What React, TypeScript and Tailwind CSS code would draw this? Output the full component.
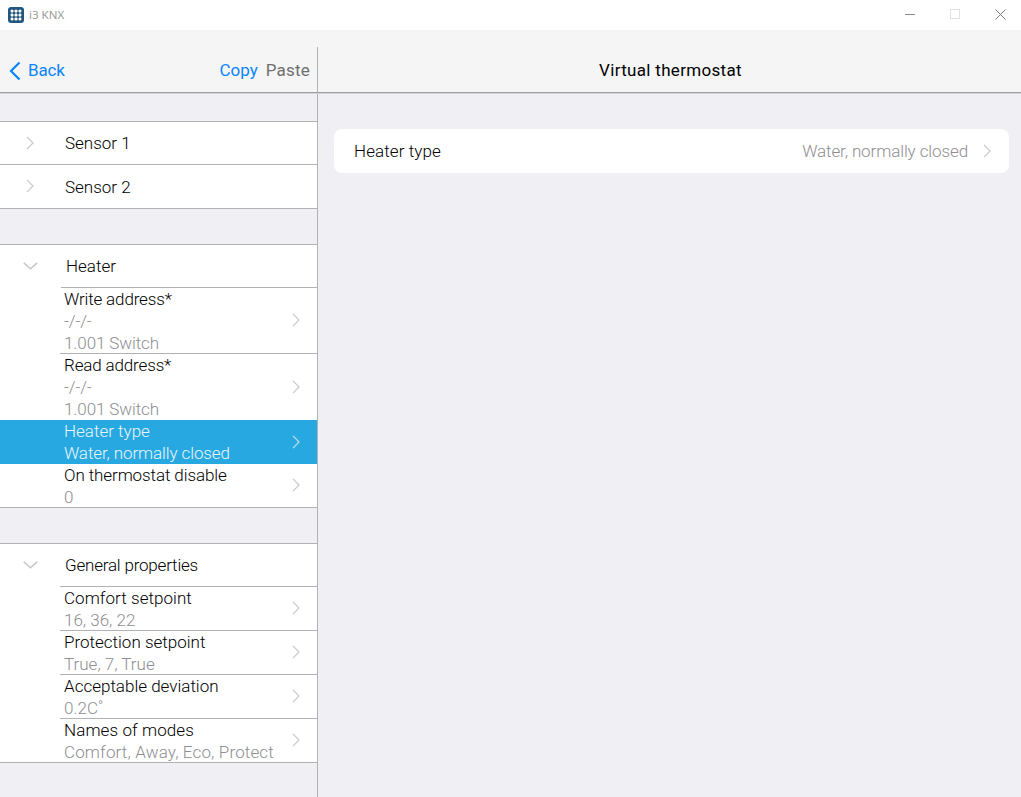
import React from "react";

const Chevron = ({ color = "#c8c8cc", className = "" }: { color?: string; className?: string }) => (
  <svg width="8" height="14" viewBox="0 0 8 14" fill="none" className={`shrink-0 ${className}`}>
    <path d="M1 0.8L7 7L1 13.2" stroke={color} strokeWidth="1.2" />
  </svg>
);

const Down = () => (
  <svg width="15" height="8" viewBox="0 0 15 8" fill="none" className="shrink-0">
    <path d="M0.8 0.8L7.5 6.8L14.2 0.8" stroke="#c8c8cc" strokeWidth="1.6" />
  </svg>
);

const Logo = () => (
  <svg width="16" height="16" viewBox="0 0 16 16" className="shrink-0">
    <rect width="16" height="16" rx="3" fill="#23577f" />
    <path d="M4 4H12M4 8H12M4 12H12M4 4V12M8 4V12M12 4V12" stroke="#8fb0c8" strokeWidth="0.8" />
    {[4, 8, 12].map((y) =>
      [4, 8, 12].map((x) => <circle key={`${x}-${y}`} cx={x} cy={y} r="1.5" fill="#fff" />),
    )}
  </svg>
);

const Collapsed = ({ label, height }: { label: string; height: string }) => (
  <div className={`flex items-center border-b border-[#b2b2b4] pl-[26px] ${height}`}>
    <Chevron className="-mt-px" />
    <span className="ml-[31px] pt-[2px] text-black">{label}</span>
  </div>
);

const Group = ({ label, offset }: { label: string; offset: string }) => (
  <div className="flex h-[42px] items-center pl-[23px]">
    <Down />
    <span className={`pt-[2px] text-black ${offset}`}>{label}</span>
  </div>
);

const Item = ({
  title,
  lines,
  height,
  selected,
  noBorder,
  titleClass = "",
  lineClass = "",
}: {
  title: string;
  lines: string[];
  height: string;
  selected?: boolean;
  noBorder?: boolean;
  titleClass?: string;
  lineClass?: string;
}) => (
  <div className={selected ? "bg-[#28a8e0]" : ""}>
    <div className={`flex items-center pl-[64px] pr-[17px] ${height}`}>
      <div className="min-w-0 flex-1 self-start leading-[22px]">
        <div className={`${selected ? "text-[#e8f6fd]" : "text-black"} ${titleClass}`}>{title}</div>
        {lines.map((l) => (
          <div key={l} className={`${selected ? "text-[#e8f6fd]" : "text-[#8e8e93]"} ${lineClass}`}>
            {l}
          </div>
        ))}
      </div>
      <Chevron color={selected ? "#c5dfee" : "#c8c8cc"} className="-mt-px" />
    </div>
    {!noBorder && <div className="ml-[60px] h-px bg-[#b2b2b4]" />}
  </div>
);

export default function App() {
  return (
    <div className="flex h-[797px] w-[1021px] flex-col overflow-hidden bg-white font-['Roboto',sans-serif] text-[17px] font-light">
      <div className="flex h-[30px] items-center bg-white pl-2">
        <Logo />
        <span className="ml-[5px] font-['Noto_Sans',sans-serif] text-[11.5px] font-normal text-[#9a9a9a]">i3 KNX</span>
        <div className="ml-auto flex items-center gap-[35px] pb-[2px] pr-[15px]">
          <div className="h-px w-[10px] bg-[#8a8a8a]" />
          <div className="h-[10px] w-[10px] border border-[#e2e2e2]" />
          <svg width="11" height="11" viewBox="0 0 11 11" fill="none">
            <path d="M0.5 0.5l10 10M10.5 0.5l-10 10" stroke="#7d7d7d" strokeWidth="1" />
          </svg>
        </div>
      </div>

      <div className="relative z-10 flex h-[63px] border-b border-[#a0a0a0] bg-[#f5f5f5] shadow-[0_1px_0_#d4d4d6]">
        <div className="relative flex w-[318px] items-center pl-[9px] pr-[8px] pt-[19px] font-normal">
          <svg width="12" height="20" viewBox="0 0 12 20" fill="none" className="shrink-0">
            <path d="M10.5 1.5L2 10l8.5 8.5" stroke="#0a84ff" strokeWidth="2.2" />
          </svg>
          <span className="ml-[7px] tracking-[-0.2px] text-[#0a84ff]">Back</span>
          <span className="ml-auto text-[#0a84ff]">Copy</span>
          <span className="ml-[8px] tracking-[0.2px] text-[#6f6f6f]">Paste</span>
          <div className="absolute bottom-0 right-0 h-[45px] w-px bg-[#b2b2b4]" />
        </div>
        <div className="flex flex-1 items-center justify-center pl-[2px] pt-[19px] font-normal tracking-[0.32px] text-black">
          Virtual thermostat
        </div>
      </div>

      <div className="flex flex-1 bg-[#efeff4]">
        <div className="w-[318px] border-r border-[#b2b2b4]">
          <div className="mt-[28px] border-t border-[#b2b2b4] bg-white">
            <Collapsed label="Sensor 1" height="h-[43px]" />
            <Collapsed label="Sensor 2" height="h-[44px]" />
          </div>
          <div className="mt-[35px] border-y border-[#b2b2b4] bg-white">
            <Group label="Heater" offset="ml-[28px]" />
            <div className="ml-[61px] h-px bg-[#b2b2b4]" />
            <Item title="Write address*" lines={["-/-/-", "1.001 Switch"]} height="h-[65px]" titleClass="tracking-[-0.15px]" lineClass="tracking-[-0.1px]" />
            <Item title="Read address*" lines={["-/-/-", "1.001 Switch"]} height="h-[66px]" noBorder titleClass="tracking-[-0.15px]" lineClass="tracking-[-0.1px]" />
            <Item title="Heater type" lines={["Water, normally closed"]} height="h-[44px]" selected noBorder lineClass="tracking-[-0.1px]" />
            <Item title="On thermostat disable" lines={["0"]} height="h-[43px]" noBorder titleClass="tracking-[-0.1px]" />
          </div>
          <div className="mt-[35px] border-y border-[#b2b2b4] bg-white">
            <Group label="General properties" offset="ml-[27px] tracking-[-0.2px]" />
            <div className="ml-[60px] h-px bg-[#b2b2b4]" />
            <Item title="Comfort setpoint" lines={["16, 36, 22"]} height="h-[43px]" titleClass="tracking-[0.05px]" />
            <Item title="Protection setpoint" lines={["True, 7, True"]} height="h-[43px]" />
            <Item title="Acceptable deviation" lines={["0.2C˚"]} height="h-[43px]" />
            <Item title="Names of modes" lines={["Comfort, Away, Eco, Protect"]} height="h-[43px]" noBorder lineClass="tracking-[0.15px]" titleClass="tracking-[0.1px]" />
          </div>
        </div>
        <div className="flex-1 pl-[16px] pr-[12px] pt-[36px]">
          <div className="flex h-[44px] items-center rounded-[8px] bg-white pl-[20px] pr-[18px]">
            <span className="pt-[1px] tracking-[0.1px] text-black">Heater type</span>
            <span className="ml-auto mr-[15px] pt-[1px] tracking-[-0.1px] text-[#8e8e93]">Water, normally closed</span>
            <Chevron className="-mt-px" />
          </div>
        </div>
      </div>
    </div>
  );
}
